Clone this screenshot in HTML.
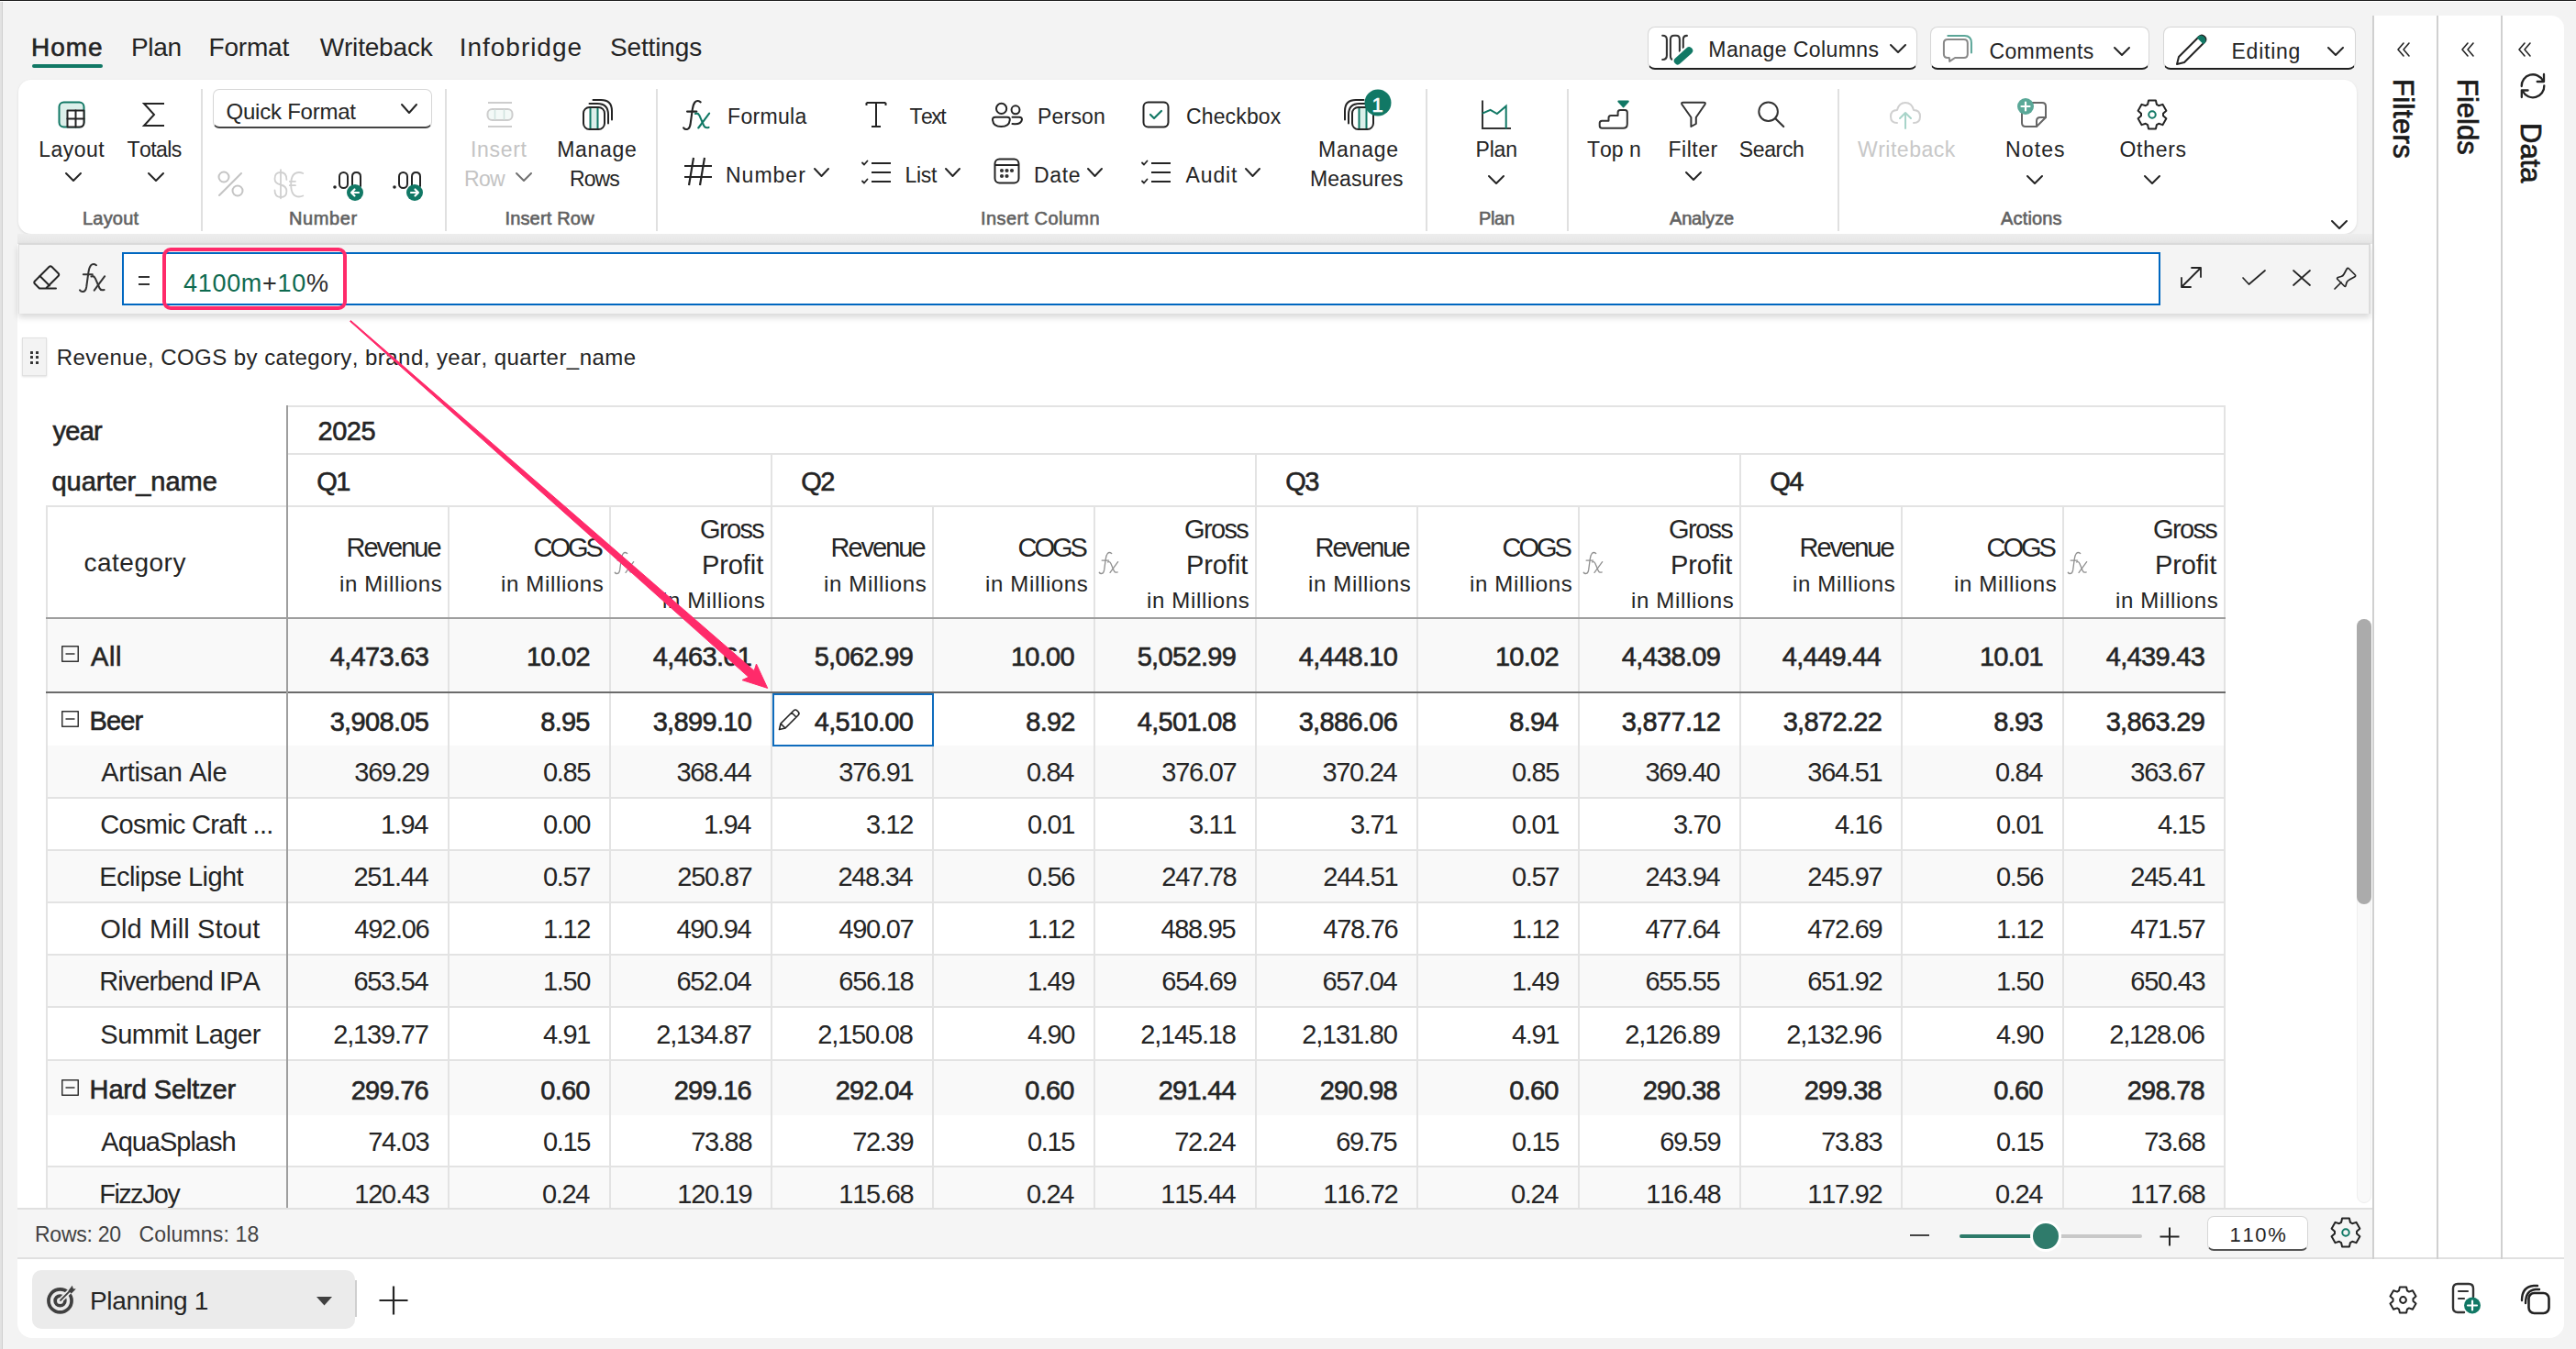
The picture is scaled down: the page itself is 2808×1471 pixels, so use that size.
<!DOCTYPE html>
<html><head><meta charset="utf-8"><title>Planning</title>
<style>
html,body{margin:0;padding:0;width:2808px;height:1471px;overflow:hidden;background:#f3f3f3;}
.r{position:absolute;}
.t{position:absolute;white-space:nowrap;line-height:1;font-family:"Liberation Sans",sans-serif;font-kerning:none;}
svg.r{overflow:visible;}
</style></head><body>
<div class="r" style="left:0px;top:0px;width:2808px;height:1px;background:#1c1c1c;"></div>
<div class="r" style="left:0px;top:1px;width:2808px;height:1px;background:#ffffff;"></div>
<div class="r" style="left:0px;top:2px;width:2px;height:1469px;background:#e2e2e2;"></div>
<div class="r" style="left:2px;top:2px;width:1px;height:1469px;background:#cfcfcf;"></div>
<div class="t" style="left:34.00px;top:38px;font-size:28px;font-weight:normal;color:#242424;letter-spacing:1.00px;-webkit-text-stroke:0.6px #242424;">Home</div>
<div class="r" style="left:35px;top:70px;width:77px;height:4px;background:#117865;border-radius:2px"></div>
<div class="t" style="left:143.00px;top:38px;font-size:28px;font-weight:normal;color:#242424;letter-spacing:-0.33px;">Plan</div>
<div class="t" style="left:227.50px;top:38px;font-size:28px;font-weight:normal;color:#242424;letter-spacing:-0.20px;">Format</div>
<div class="t" style="left:348.75px;top:38px;font-size:28px;font-weight:normal;color:#242424;letter-spacing:-0.19px;">Writeback</div>
<div class="t" style="left:500.75px;top:38px;font-size:28px;font-weight:normal;color:#242424;letter-spacing:0.97px;">Infobridge</div>
<div class="t" style="left:665.00px;top:38px;font-size:28px;font-weight:normal;color:#242424;letter-spacing:-0.14px;">Settings</div>
<div class="r" style="left:1795.5px;top:28.5px;width:294.0px;height:47.5px;box-sizing:border-box;background:#fff;border:1px solid #d6d6d6;border-bottom:2px solid #1f1f1f;border-radius:8px"></div>
<div class="r" style="left:2104px;top:28.5px;width:239px;height:47.5px;box-sizing:border-box;background:#fff;border:1px solid #d6d6d6;border-bottom:2px solid #1f1f1f;border-radius:8px"></div>
<div class="r" style="left:2358px;top:28.5px;width:209.5px;height:47.5px;box-sizing:border-box;background:#fff;border:1px solid #d6d6d6;border-bottom:2px solid #1f1f1f;border-radius:8px"></div>
<div class="t" style="left:1862.30px;top:43px;font-size:23px;font-weight:normal;color:#242424;letter-spacing:0.42px;">Manage Columns</div>
<div class="t" style="left:2168.50px;top:45px;font-size:23px;font-weight:normal;color:#242424;letter-spacing:0.36px;">Comments</div>
<div class="t" style="left:2432.50px;top:45px;font-size:23px;font-weight:normal;color:#242424;letter-spacing:0.75px;">Editing</div>
<svg class="r" style="left:2059.2px;top:47.2px;" width="20" height="12" viewBox="0 0 20 12" fill="none" stroke-linecap="round" stroke-linejoin="round"><path d="M2 2 L10.0 10 L18 2" stroke="#242424" stroke-width="2"/></svg>
<svg class="r" style="left:2302.7px;top:49.5px;" width="20" height="12" viewBox="0 0 20 12" fill="none" stroke-linecap="round" stroke-linejoin="round"><path d="M2 2 L10.0 10 L18 2" stroke="#242424" stroke-width="2"/></svg>
<svg class="r" style="left:2536.2px;top:49.5px;" width="20" height="12" viewBox="0 0 20 12" fill="none" stroke-linecap="round" stroke-linejoin="round"><path d="M2 2 L10.0 10 L18 2" stroke="#242424" stroke-width="2"/></svg>
<svg class="r" style="left:1810px;top:36px;" width="38" height="36" viewBox="0 0 38 36" fill="none" stroke-linecap="round" stroke-linejoin="round"><path d="M2.2 2.7 Q6.9 2.7 6.9 7 L6.9 24.5 Q6.9 29 2.2 29" stroke="#333" stroke-width="2.1"/><path d="M13.7 29 Q10.9 29 10.9 25 L10.9 7 Q10.9 2.7 15 2.7 L17 2.7 Q20.9 2.7 20.9 7 L20.9 20" stroke="#333" stroke-width="2.1"/><path d="M28.9 2.9 Q24.8 2.9 24.8 7 L24.8 16" stroke="#333" stroke-width="2.1"/><path d="M18.8 30.4 L31.2 19.2" stroke="#fff" stroke-width="12"/><path d="M18.8 30.4 L31.2 19.2" stroke="#117865" stroke-width="8"/></svg>
<svg class="r" style="left:2116px;top:36px;" width="36" height="34" viewBox="0 0 36 34" fill="none" stroke-linecap="round" stroke-linejoin="round"><path d="M7.3 2.9 L25.5 2.9 Q32.9 2.9 32.9 10.5 L32.9 21.6" stroke="#5aa597" stroke-width="2"/><path d="M2.9 11 Q2.9 7 7 7 L24.8 7 Q28.8 7 28.8 11 L28.8 23 Q28.8 27 24.8 27 L15.1 27 L9.2 30.9 L8.8 27 L7 27 Q2.9 27 2.9 23 Z" stroke="#888" stroke-width="2"/></svg>
<svg class="r" style="left:2370px;top:35px;" width="36" height="38" viewBox="0 0 36 38" fill="none" stroke-linecap="round" stroke-linejoin="round"><path d="M3 35 L5 27 L27 5 Q30 2 33 5 Q36 8 33 11 L11 33 Z" stroke="#242424" stroke-width="2"/><path d="M26 6 Q29 3 32 6 Q35 9 32 12 L29 9 Z" fill="#117865" stroke="#117865" stroke-width="2"/></svg>
<div class="r" style="left:2586px;top:17px;width:209px;height:1356px;background:#fff;border-top-right-radius:14px"></div>
<div class="r" style="left:19.5px;top:87px;width:2549.5px;height:168px;background:#fff;border-radius:14px;box-shadow:0 1px 3px rgba(0,0,0,0.10)"></div>
<div class="r" style="left:219px;top:97px;width:2px;height:155px;background:#e0e0e0;"></div>
<div class="r" style="left:484.5px;top:97px;width:2px;height:155px;background:#e0e0e0;"></div>
<div class="r" style="left:714.5px;top:97px;width:2px;height:155px;background:#e0e0e0;"></div>
<div class="r" style="left:1553.5px;top:97px;width:2px;height:155px;background:#e0e0e0;"></div>
<div class="r" style="left:1707.5px;top:97px;width:2px;height:155px;background:#e0e0e0;"></div>
<div class="r" style="left:2002.5px;top:97px;width:2px;height:155px;background:#e0e0e0;"></div>
<div class="t" style="left:90.00px;top:228px;font-size:20px;font-weight:normal;color:#616161;letter-spacing:0.20px;-webkit-text-stroke:0.6px #616161;">Layout</div>
<div class="t" style="left:315.00px;top:228px;font-size:20px;font-weight:normal;color:#616161;letter-spacing:0.60px;-webkit-text-stroke:0.6px #616161;">Number</div>
<div class="t" style="left:550.40px;top:228px;font-size:20px;font-weight:normal;color:#616161;letter-spacing:0.18px;-webkit-text-stroke:0.6px #616161;">Insert Row</div>
<div class="t" style="left:1069.00px;top:228px;font-size:20px;font-weight:normal;color:#616161;letter-spacing:0.42px;-webkit-text-stroke:0.6px #616161;">Insert Column</div>
<div class="t" style="left:1612.00px;top:228px;font-size:20px;font-weight:normal;color:#616161;letter-spacing:-0.33px;-webkit-text-stroke:0.6px #616161;">Plan</div>
<div class="t" style="left:1820.00px;top:228px;font-size:20px;font-weight:normal;color:#616161;letter-spacing:-0.17px;-webkit-text-stroke:0.6px #616161;">Analyze</div>
<div class="t" style="left:2181.00px;top:228px;font-size:20px;font-weight:normal;color:#616161;letter-spacing:0.17px;-webkit-text-stroke:0.6px #616161;">Actions</div>
<svg class="r" style="left:2539.5px;top:238.5px;" width="20" height="12" viewBox="0 0 20 12" fill="none" stroke-linecap="round" stroke-linejoin="round"><path d="M2 2 L10.0 10 L18 2" stroke="#242424" stroke-width="2"/></svg>
<svg class="r" style="left:63px;top:110px;" width="30" height="30" viewBox="0 0 30 30" fill="none" stroke-linecap="round" stroke-linejoin="round"><rect x="1.5" y="1.5" width="27" height="27" rx="5" fill="#dcefea" stroke="#117865" stroke-width="2"/><path d="M10.5 28.5 L10.5 10.5 L28.5 10.5 L28.5 23.5 Q28.5 28.5 23.5 28.5 Z" fill="#fff" stroke="#242424" stroke-width="2"/><path d="M19.5 10.5 L19.5 28.5 M10.5 19.5 L28.5 19.5" stroke="#242424" stroke-width="2"/></svg>
<svg class="r" style="left:155px;top:111px;" width="27" height="28" viewBox="0 0 27 28" fill="none" stroke-linecap="round" stroke-linejoin="round"><path d="M24 2 L2 2 L13 14 L2 26 L24 26" stroke="#242424" stroke-width="2" stroke-linecap="butt" stroke-linejoin="miter"/></svg>
<div class="t" style="left:42.30px;top:152px;font-size:23px;font-weight:normal;color:#242424;letter-spacing:0.48px;">Layout</div>
<div class="t" style="left:138.60px;top:152px;font-size:23px;font-weight:normal;color:#242424;letter-spacing:-0.60px;">Totals</div>
<svg class="r" style="left:70.0px;top:186.5px;" width="20" height="12" viewBox="0 0 20 12" fill="none" stroke-linecap="round" stroke-linejoin="round"><path d="M2 2 L10.0 10 L18 2" stroke="#242424" stroke-width="2"/></svg>
<svg class="r" style="left:160.0px;top:186.5px;" width="20" height="12" viewBox="0 0 20 12" fill="none" stroke-linecap="round" stroke-linejoin="round"><path d="M2 2 L10.0 10 L18 2" stroke="#242424" stroke-width="2"/></svg>
<div class="r" style="left:232px;top:97px;width:239px;height:43px;box-sizing:border-box;background:#fff;border:1px solid #d6d6d6;border-bottom:2px solid #444;border-radius:7px"></div>
<div class="t" style="left:246.50px;top:109.5px;font-size:24px;font-weight:normal;color:#242424;letter-spacing:-0.23px;">Quick Format</div>
<svg class="r" style="left:435.6px;top:112.2px;" width="20" height="13" viewBox="0 0 20 13" fill="none" stroke-linecap="round" stroke-linejoin="round"><path d="M2 2 L10.0 11 L18 2" stroke="#242424" stroke-width="2"/></svg>
<svg class="r" style="left:236px;top:185px;" width="32" height="32" viewBox="0 0 32 32" fill="none" stroke-linecap="round" stroke-linejoin="round"><circle cx="8" cy="8" r="5.5" stroke="#c4c4c4" stroke-width="2"/><circle cx="23" cy="23" r="5.5" stroke="#c4c4c4" stroke-width="2"/><path d="M3 28 L27 4" stroke="#c4c4c4" stroke-width="2"/></svg>
<svg class="r" style="left:296px;top:183px;" width="40" height="36" viewBox="0 0 40 36" fill="none" stroke-linecap="round" stroke-linejoin="round"><path d="M10 2.2 L10 33.3" stroke="#d0d0d0" stroke-width="1.8"/><path d="M16.4 12.9 Q16.4 5 10 5 Q3.5 5 3.5 12 Q3.5 17 10 18.5 Q16.4 20 16.4 25.5 Q16.4 32 10 32 Q3.5 32 3.5 24.5" stroke="#d0d0d0" stroke-width="1.8"/><path d="M34.3 6 Q32 5 30 5 Q21.2 5 21.2 18.2 Q21.2 31.5 30 31.5 Q32 31.5 34.3 30.5 M19.8 14.8 L26 14.8 M19.8 19.2 L26 19.2" stroke="#d0d0d0" stroke-width="1.8"/></svg>
<svg class="r" style="left:362px;top:186px;" width="36" height="34" viewBox="0 0 36 34" fill="none" stroke-linecap="round" stroke-linejoin="round"><circle cx="3" cy="18" r="1.8" fill="#242424"/><rect x="8" y="2" width="9" height="17" rx="4.5" stroke="#242424" stroke-width="2"/><path d="M22 17 L22 6.5 Q22 2 26.5 2 Q31 2 31 6.5 L31 17" stroke="#242424" stroke-width="2"/><circle cx="25" cy="24" r="9" fill="#117865"/><path d="M29 24 L21 24 M24.5 20.5 L21 24 L24.5 27.5" stroke="#fff" stroke-width="2.2"/></svg>
<svg class="r" style="left:426.5px;top:186px;" width="36" height="34" viewBox="0 0 36 34" fill="none" stroke-linecap="round" stroke-linejoin="round"><circle cx="3" cy="18" r="1.8" fill="#242424"/><rect x="8" y="2" width="9" height="17" rx="4.5" stroke="#242424" stroke-width="2"/><path d="M22 17 L22 6.5 Q22 2 26.5 2 Q31 2 31 6.5 L31 17" stroke="#242424" stroke-width="2"/><circle cx="25" cy="24" r="9" fill="#117865"/><path d="M21 24 L29 24 M25.5 20.5 L29 24 L25.5 27.5" stroke="#fff" stroke-width="2.2"/></svg>
<svg class="r" style="left:530px;top:110px;" width="30" height="30" viewBox="0 0 30 30" fill="none" stroke-linecap="round" stroke-linejoin="round"><path d="M2 2 L28 2 M2 28 L28 28" stroke="#cdcdcd" stroke-width="2" stroke-linecap="butt"/><rect x="1.5" y="9" width="27" height="12" rx="5" fill="#f3f9f7" stroke="#cdcdcd" stroke-width="2"/><path d="M9.5 10 L9.5 20 M19.5 10 L19.5 20" stroke="#cfe3de" stroke-width="1.5"/></svg>
<div class="t" style="left:513.00px;top:152px;font-size:23px;font-weight:normal;color:#c4c4c4;letter-spacing:0.68px;">Insert</div>
<div class="t" style="left:505.90px;top:183.6px;font-size:23px;font-weight:normal;color:#c4c4c4;letter-spacing:-0.60px;">Row</div>
<svg class="r" style="left:561.0px;top:186.5px;" width="20" height="12" viewBox="0 0 20 12" fill="none" stroke-linecap="round" stroke-linejoin="round"><path d="M2 2 L10.0 10 L18 2" stroke="#707070" stroke-width="2"/></svg>
<svg class="r" style="left:625.5px;top:106px;" width="45" height="38" viewBox="0 0 45 38" fill="none" stroke-linecap="round" stroke-linejoin="round"><path d="M20.50 3.00 L29.00 3.00 Q41.00 3.00 41.00 15.00 L41.00 24.50" stroke="#fff" stroke-width="5"/><path d="M20.50 3.00 L29.00 3.00 Q41.00 3.00 41.00 15.00 L41.00 24.50" stroke="#242424" stroke-width="2"/><path d="M16.50 7.00 L25.00 7.00 Q37.00 7.00 37.00 19.00 L37.00 28.50" stroke="#fff" stroke-width="5"/><path d="M16.50 7.00 L25.00 7.00 Q37.00 7.00 37.00 19.00 L37.00 28.50" stroke="#242424" stroke-width="2"/><rect x="10.00" y="11" width="23" height="24" rx="6.5" fill="#fff" stroke="#fff" stroke-width="5"/><rect x="17.00" y="12" width="9" height="22" fill="#dcefea"/><path d="M17.50 12 L17.50 34 M25.50 12 L25.50 34" stroke="#117865" stroke-width="2" stroke-linecap="butt"/><rect x="10.00" y="11" width="23" height="24" rx="6.5" stroke="#242424" stroke-width="2"/></svg>
<div class="t" style="left:607.20px;top:152px;font-size:23px;font-weight:normal;color:#242424;letter-spacing:0.70px;">Manage</div>
<div class="t" style="left:621.00px;top:183.6px;font-size:23px;font-weight:normal;color:#242424;letter-spacing:-0.90px;">Rows</div>
<svg class="r" style="left:742px;top:108px;" width="33" height="35" viewBox="0 0 33 35" fill="none" stroke-linecap="round" stroke-linejoin="round"><g transform="scale(1.0312,1.0294)"><path d="M21 3.2 Q17.5 0.6 15 3.4 Q13.2 5.6 12.4 11 L10.2 27 Q9.4 31.5 6.8 32 Q4.4 32.4 3 30.4" stroke="#242424" stroke-width="2.04" fill="none"/><path d="M6.8 13.2 L16.8 13.2" stroke="#242424" stroke-width="2.04" fill="none"/><path d="M15.5 15.5 Q18.3 14.2 19.9 17.6 L24.4 28 Q25.8 31.2 29.6 30" stroke="#117865" stroke-width="2.04" fill="none"/><path d="M30.2 15.2 L18.7 30.6" stroke="#117865" stroke-width="2.04" fill="none"/></g></svg>
<div class="t" style="left:793.00px;top:116px;font-size:23px;font-weight:normal;color:#242424;letter-spacing:0.33px;">Formula</div>
<svg class="r" style="left:943px;top:110px;" width="24" height="30" viewBox="0 0 24 30" fill="none" stroke-linecap="round" stroke-linejoin="round"><path d="M1.5 2 L22.5 2 M1.5 2 L1.5 5 M22.5 2 L22.5 5 M12 2 L12 28 M7 28 L17 28" stroke="#242424" stroke-width="2" stroke-linecap="butt"/></svg>
<div class="t" style="left:991.50px;top:116px;font-size:23px;font-weight:normal;color:#242424;letter-spacing:-1.50px;">Text</div>
<svg class="r" style="left:1080px;top:111px;" width="36" height="28" viewBox="0 0 36 28" fill="none" stroke-linecap="round" stroke-linejoin="round"><circle cx="11.6" cy="7.4" r="5.6" stroke="#242424" stroke-width="2"/><path d="M5 16.8 L18 16.8 Q21 16.8 20.8 19.8 Q20 27 11.4 27 Q2.8 27 2 19.8 Q1.8 16.8 5 16.8 Z" stroke="#242424" stroke-width="2"/><circle cx="27" cy="8.8" r="4.45" stroke="#242424" stroke-width="2"/><path d="M23.5 16.8 L31 16.8 Q34.2 16.8 34 19.5 Q33 24.5 26 24.3 L23.5 24" stroke="#242424" stroke-width="2"/></svg>
<div class="t" style="left:1131.00px;top:116px;font-size:23px;font-weight:normal;color:#242424;letter-spacing:0.20px;">Person</div>
<svg class="r" style="left:1245px;top:110px;" width="30" height="30" viewBox="0 0 30 30" fill="none" stroke-linecap="round" stroke-linejoin="round"><rect x="1.5" y="1.5" width="27" height="27" rx="5" stroke="#242424" stroke-width="2"/><path d="M9 15 L13 19 L21 11" stroke="#117865" stroke-width="2.2"/></svg>
<div class="t" style="left:1293.00px;top:116px;font-size:23px;font-weight:normal;color:#242424;letter-spacing:0.14px;">Checkbox</div>
<svg class="r" style="left:744px;top:170px;" width="34" height="34" viewBox="0 0 34 34" fill="none" stroke-linecap="round" stroke-linejoin="round"><path d="M12 2 L7 32 M24 2 L19 32 M2 11 L32 11 M2 23 L32 23" stroke="#242424" stroke-width="2.2" stroke-linecap="butt"/></svg>
<div class="t" style="left:791.00px;top:180px;font-size:23px;font-weight:normal;color:#242424;letter-spacing:1.00px;">Number</div>
<svg class="r" style="left:886.0px;top:182.0px;" width="19" height="12" viewBox="0 0 19 12" fill="none" stroke-linecap="round" stroke-linejoin="round"><path d="M2 2 L9.5 10 L17 2" stroke="#242424" stroke-width="2"/></svg>
<svg class="r" style="left:938px;top:175px;" width="35" height="27" viewBox="0 0 35 27" fill="none" stroke-linecap="round" stroke-linejoin="round"><path d="M12 3 L33 3 M12 13 L33 13 M12 23 L33 23" stroke="#242424" stroke-width="2" stroke-linecap="butt"/><path d="M2 2.5 L4 4.5 L7.5 0.5 M2 22.5 L4 24.5 L7.5 20.5" stroke="#242424" stroke-width="1.8"/></svg>
<div class="t" style="left:986.50px;top:180px;font-size:23px;font-weight:normal;color:#242424;letter-spacing:-0.33px;">List</div>
<svg class="r" style="left:1028.5px;top:182.0px;" width="19" height="12" viewBox="0 0 19 12" fill="none" stroke-linecap="round" stroke-linejoin="round"><path d="M2 2 L9.5 10 L17 2" stroke="#242424" stroke-width="2"/></svg>
<svg class="r" style="left:1083px;top:172px;" width="30" height="30" viewBox="0 0 30 30" fill="none" stroke-linecap="round" stroke-linejoin="round"><rect x="1.5" y="1.5" width="26" height="26" rx="5" stroke="#242424" stroke-width="2"/><path d="M2 8 L27 8" stroke="#242424" stroke-width="2"/><circle cx="9" cy="14" r="2.1" fill="#333"/><circle cx="14.5" cy="14" r="2.1" fill="#333"/><circle cx="20" cy="14" r="2.1" fill="#333"/><circle cx="9" cy="20" r="2.1" fill="#333"/><circle cx="14.5" cy="20" r="2.1" fill="#333"/></svg>
<div class="t" style="left:1127.00px;top:180px;font-size:23px;font-weight:normal;color:#242424;letter-spacing:0.67px;">Date</div>
<svg class="r" style="left:1183.5px;top:182.0px;" width="19" height="12" viewBox="0 0 19 12" fill="none" stroke-linecap="round" stroke-linejoin="round"><path d="M2 2 L9.5 10 L17 2" stroke="#242424" stroke-width="2"/></svg>
<svg class="r" style="left:1243px;top:175px;" width="35" height="27" viewBox="0 0 35 27" fill="none" stroke-linecap="round" stroke-linejoin="round"><path d="M12 3 L33 3 M12 13 L33 13 M12 23 L33 23" stroke="#242424" stroke-width="2" stroke-linecap="butt"/><path d="M2 2.5 L4 4.5 L7.5 0.5 M2 22.5 L4 24.5 L7.5 20.5" stroke="#242424" stroke-width="1.8"/></svg>
<div class="t" style="left:1292.50px;top:180px;font-size:23px;font-weight:normal;color:#242424;letter-spacing:0.88px;">Audit</div>
<svg class="r" style="left:1355.5px;top:182.0px;" width="19" height="12" viewBox="0 0 19 12" fill="none" stroke-linecap="round" stroke-linejoin="round"><path d="M2 2 L9.5 10 L17 2" stroke="#242424" stroke-width="2"/></svg>
<svg class="r" style="left:1463.5px;top:105.5px;" width="45" height="38" viewBox="0 0 45 38" fill="none" stroke-linecap="round" stroke-linejoin="round"><path d="M22.50 3.00 L14.00 3.00 Q2.00 3.00 2.00 15.00 L2.00 24.50" stroke="#fff" stroke-width="5"/><path d="M22.50 3.00 L14.00 3.00 Q2.00 3.00 2.00 15.00 L2.00 24.50" stroke="#242424" stroke-width="2"/><path d="M26.50 7.00 L18.00 7.00 Q6.00 7.00 6.00 19.00 L6.00 28.50" stroke="#fff" stroke-width="5"/><path d="M26.50 7.00 L18.00 7.00 Q6.00 7.00 6.00 19.00 L6.00 28.50" stroke="#242424" stroke-width="2"/><rect x="10.00" y="11.0" width="23" height="24" rx="6.5" fill="#fff" stroke="#fff" stroke-width="5"/><rect x="17.00" y="12.0" width="9" height="22" fill="#dcefea"/><path d="M17.50 12.0 L17.50 34.0 M25.50 12.0 L25.50 34.0" stroke="#117865" stroke-width="2" stroke-linecap="butt"/><rect x="10.00" y="11.0" width="23" height="24" rx="6.5" stroke="#242424" stroke-width="2"/></svg>
<svg class="r" style="left:1487px;top:97px;" width="30" height="30" viewBox="0 0 30 30" fill="none" stroke-linecap="round" stroke-linejoin="round"><circle cx="15" cy="15" r="14.5" fill="#117865"/></svg>
<div class="t" style="left:1495.50px;top:104px;font-size:22px;font-weight:normal;color:#fff;-webkit-text-stroke:0.6px #fff;">1</div>
<div class="t" style="left:1437.00px;top:152px;font-size:23px;font-weight:normal;color:#242424;letter-spacing:0.80px;">Manage</div>
<div class="t" style="left:1428.00px;top:184px;font-size:23px;font-weight:normal;color:#242424;letter-spacing:0.07px;">Measures</div>
<svg class="r" style="left:1614px;top:109px;" width="34" height="34" viewBox="0 0 34 34" fill="none" stroke-linecap="round" stroke-linejoin="round"><path d="M2 0.5 L2 31 L33 31" stroke="#333" stroke-width="2" stroke-linecap="butt" stroke-linejoin="miter"/><path d="M2.5 14.4 L10.6 10.9 L17.9 15.1 L27.7 6.7 L27.7 30.6" stroke="#117865" stroke-width="2" stroke-linejoin="miter"/></svg>
<div class="t" style="left:1608.50px;top:152px;font-size:23px;font-weight:normal;color:#242424;letter-spacing:-0.17px;">Plan</div>
<svg class="r" style="left:1621.0px;top:190.2px;" width="20" height="12" viewBox="0 0 20 12" fill="none" stroke-linecap="round" stroke-linejoin="round"><path d="M2 2 L10.0 10 L18 2" stroke="#242424" stroke-width="2"/></svg>
<svg class="r" style="left:1742px;top:108px;" width="34" height="34" viewBox="0 0 34 34" fill="none" stroke-linecap="round" stroke-linejoin="round"><path d="M1.7 29 L1.7 26.3 Q1.7 23.8 4.2 23.8 L11.5 23.8 L11.5 20.4 Q11.5 17.9 14 17.9 L21.6 17.9 L21.6 14.4 Q21.6 11.9 24.1 11.9 L29.3 11.9 Q31.8 11.9 31.8 14.4 L31.8 27.3 Q31.8 31.8 27.3 31.8 L4.2 31.8 Q1.7 31.8 1.7 29 Z" stroke="#333" stroke-width="2"/><path d="M22.3 2.5 L32.8 2.5 L27.6 8.4 Z" fill="#117865" stroke="#117865" stroke-width="2"/></svg>
<div class="t" style="left:1730.00px;top:152px;font-size:23px;font-weight:normal;color:#242424;">Top n</div>
<svg class="r" style="left:1830px;top:110px;" width="32" height="30" viewBox="0 0 32 30" fill="none" stroke-linecap="round" stroke-linejoin="round"><path d="M4.8 1.7 L27.1 1.7 Q29.8 1.7 28.4 4 L18.8 18 L18.8 25 L13.4 28 L13.4 18 L3.5 4 Q2.2 1.7 4.8 1.7 Z" stroke="#333" stroke-width="2"/></svg>
<div class="t" style="left:1818.50px;top:152px;font-size:23px;font-weight:normal;color:#242424;letter-spacing:0.50px;">Filter</div>
<svg class="r" style="left:1836.0px;top:186.0px;" width="20" height="12" viewBox="0 0 20 12" fill="none" stroke-linecap="round" stroke-linejoin="round"><path d="M2 2 L10.0 10 L18 2" stroke="#242424" stroke-width="2"/></svg>
<svg class="r" style="left:1914px;top:108px;" width="34" height="34" viewBox="0 0 34 34" fill="none" stroke-linecap="round" stroke-linejoin="round"><circle cx="13.6" cy="13.7" r="10.3" stroke="#333" stroke-width="2"/><path d="M21 21 L30.2 30" stroke="#333" stroke-width="2.2"/></svg>
<div class="t" style="left:1895.70px;top:152px;font-size:23px;font-weight:normal;color:#242424;letter-spacing:-0.34px;">Search</div>
<svg class="r" style="left:2059px;top:110px;" width="36" height="32" viewBox="0 0 36 32" fill="none" stroke-linecap="round" stroke-linejoin="round"><path d="M9 24 Q2 24 2 17 Q2 10 9 10 Q11 2 18 2 Q25 2 27 10 Q34 10 34 17 Q34 24 27 24" stroke="#d0d0d0" stroke-width="2"/><path d="M18 30 L18 13 M12 19 L18 13 L24 19" stroke="#a8d4c9" stroke-width="2"/></svg>
<div class="t" style="left:2025.00px;top:152px;font-size:23px;font-weight:normal;color:#c8c8c8;letter-spacing:0.50px;">Writeback</div>
<svg class="r" style="left:2198px;top:106px;" width="36" height="36" viewBox="0 0 36 36" fill="none" stroke-linecap="round" stroke-linejoin="round"><path d="M14 6 L28 6 Q32 6 32 10 L32 22 L22 32 L10 32 Q6 32 6 28 L6 16" stroke="#666" stroke-width="2"/><path d="M32 22 L26 22 Q22 22 22 26 L22 32" stroke="#666" stroke-width="2"/><circle cx="10" cy="10" r="9" fill="#5aa898"/><path d="M10 5.5 L10 14.5 M5.5 10 L14.5 10" stroke="#fff" stroke-width="2.2"/></svg>
<div class="t" style="left:2186.00px;top:152px;font-size:23px;font-weight:normal;color:#242424;letter-spacing:1.12px;">Notes</div>
<svg class="r" style="left:2208.0px;top:190.0px;" width="20" height="12" viewBox="0 0 20 12" fill="none" stroke-linecap="round" stroke-linejoin="round"><path d="M2 2 L10.0 10 L18 2" stroke="#242424" stroke-width="2"/></svg>
<svg class="r" style="left:2329px;top:108px;" width="34" height="34" viewBox="0 0 34 34" fill="none" stroke-linecap="round" stroke-linejoin="round"><path d="M13.05 1.52 L20.95 1.52 L21.92 5.98 L24.08 7.23 L28.43 5.83 L32.39 12.68 L29.01 15.75 L29.01 18.25 L32.39 21.32 L28.43 28.17 L24.08 26.77 L21.92 28.02 L20.95 32.48 L13.05 32.48 L12.08 28.02 L9.92 26.77 L5.57 28.17 L1.61 21.32 L4.99 18.25 L4.99 15.75 L1.61 12.68 L5.57 5.83 L9.92 7.23 L12.08 5.98 Z" stroke="#242424" stroke-width="2" stroke-linejoin="round"/><circle cx="17.0" cy="17.0" r="3.74" stroke="#117865" stroke-width="2"/></svg>
<div class="t" style="left:2310.50px;top:152px;font-size:23px;font-weight:normal;color:#242424;letter-spacing:0.70px;">Others</div>
<svg class="r" style="left:2336.0px;top:190.0px;" width="20" height="12" viewBox="0 0 20 12" fill="none" stroke-linecap="round" stroke-linejoin="round"><path d="M2 2 L10.0 10 L18 2" stroke="#242424" stroke-width="2"/></svg>
<div class="r" style="left:19px;top:265px;width:2776px;height:1193.5px;background:#fff;border-radius:0 0 16px 16px"></div>
<div class="r" style="left:19px;top:255px;width:2567px;height:11px;background:linear-gradient(#ededed,#e6e6e6)"></div>
<div class="r" style="left:19.5px;top:265px;width:2564px;height:77px;box-sizing:border-box;background:#f4f4f4;border-top:2px solid #d9d9d9;border-left:1px solid #e0e0e0;border-right:2px solid #dcdcdc;box-shadow:0 4px 7px rgba(0,0,0,0.16)"></div>
<svg class="r" style="left:35px;top:288px;" width="32" height="30" viewBox="0 0 32 30" fill="none" stroke-linecap="round" stroke-linejoin="round"><path d="M14 26.5 L8 26.5 L3 21.5 Q1.5 20 3 18.5 L18.5 3 Q20 1.5 21.5 3 L28.5 10 Q30 11.5 28.5 13 L15 26.5 L26 26.5" stroke="#242424" stroke-width="2"/><path d="M8.5 13 L19 23.5" stroke="#242424" stroke-width="2"/></svg>
<svg class="r" style="left:84px;top:286px;" width="32" height="34" viewBox="0 0 32 34" fill="none" stroke-linecap="round" stroke-linejoin="round"><g transform="scale(1.0000,1.0000)"><path d="M21 3.2 Q17.5 0.6 15 3.4 Q13.2 5.6 12.4 11 L10.2 27 Q9.4 31.5 6.8 32 Q4.4 32.4 3 30.4" stroke="#333" stroke-width="2.00" fill="none"/><path d="M6.8 13.2 L16.8 13.2" stroke="#333" stroke-width="2.00" fill="none"/><path d="M15.5 15.5 Q18.3 14.2 19.9 17.6 L24.4 28 Q25.8 31.2 29.6 30" stroke="#333" stroke-width="2.00" fill="none"/><path d="M30.2 15.2 L18.7 30.6" stroke="#333" stroke-width="2.00" fill="none"/></g></svg>
<div class="r" style="left:132.5px;top:275px;width:2222px;height:58px;box-sizing:border-box;background:#fff;border:2px solid #0067c0"></div>
<div class="r" style="left:150.75px;top:301px;width:12.5px;height:2.2px;background:#333;"></div>
<div class="r" style="left:150.75px;top:309px;width:12.5px;height:2.2px;background:#333;"></div>
<div class="r" style="left:177px;top:270px;width:201px;height:67.5px;box-sizing:border-box;border:4px solid #ff2a6a;border-radius:9px"></div>
<div class="t" style="left:200.00px;top:296px;font-size:27px;font-weight:normal;color:#0e6a4f;letter-spacing:0.70px;"><span style="color:#0e6a4f">4100m</span><span style="color:#2b2b2b">+</span><span style="color:#0e6a4f">10</span><span style="color:#2b2b2b">%</span></div>
<svg class="r" style="left:2375px;top:289px;" width="27" height="27" viewBox="0 0 27 27" fill="none" stroke-linecap="round" stroke-linejoin="round"><path d="M3 24 L24 3 M14 3 L24 3 L24 13 M3 14 L3 24 L13 24" stroke="#242424" stroke-width="1.8"/></svg>
<svg class="r" style="left:2442.5px;top:293px;" width="28" height="20" viewBox="0 0 28 20" fill="none" stroke-linecap="round" stroke-linejoin="round"><path d="M2 10 L8.5 17 L26 2" stroke="#242424" stroke-width="1.7"/></svg>
<svg class="r" style="left:2497.5px;top:293px;" width="23" height="20" viewBox="0 0 23 20" fill="none" stroke-linecap="round" stroke-linejoin="round"><path d="M2 2 L20 18 M20 2 L2 18" stroke="#242424" stroke-width="1.7"/></svg>
<svg class="r" style="left:2542.5px;top:289px;" width="28" height="28" viewBox="0 0 28 28" fill="none" stroke-linecap="round" stroke-linejoin="round"><path d="M2 26 L9 19" stroke="#242424" stroke-width="1.7"/><path d="M5 15.5 L12.5 23 Q13.5 24 14 22.5 L15 19 Q16 17 18 16 L23.5 13 Q25.5 12 24 10.5 L17.5 4 Q16 2.5 15 4.5 L12 10 Q11 12 9 12.5 L5.5 13.5 Q4 14.5 5 15.5 Z" stroke="#242424" stroke-width="1.7"/></svg>
<div class="r" style="left:23.5px;top:367.5px;width:27px;height:42px;box-sizing:border-box;background:#f3f3f3;border:1px solid #e0e0e0;box-shadow:0 1px 2px rgba(0,0,0,0.12)"></div>
<div class="r" style="left:32.5px;top:382.5px;width:3px;height:3px;background:#333;border-radius:0.5px"></div>
<div class="r" style="left:32.5px;top:388px;width:3px;height:3px;background:#333;border-radius:0.5px"></div>
<div class="r" style="left:32.5px;top:393.5px;width:3px;height:3px;background:#333;border-radius:0.5px"></div>
<div class="r" style="left:38.5px;top:382.5px;width:3px;height:3px;background:#333;border-radius:0.5px"></div>
<div class="r" style="left:38.5px;top:388px;width:3px;height:3px;background:#333;border-radius:0.5px"></div>
<div class="r" style="left:38.5px;top:393.5px;width:3px;height:3px;background:#333;border-radius:0.5px"></div>
<div class="t" style="left:61.75px;top:378px;font-size:24px;font-weight:normal;color:#242424;letter-spacing:0.45px;">Revenue, COGS by category, brand, year, quarter_name</div>
<div class="r" style="left:19px;top:341px;width:2567px;height:977px;overflow:hidden"><div class="r" style="left:-19px;top:-341px;width:2808px;height:1471px"><div class="r" style="left:50px;top:675px;width:2376px;height:79px;background:#f9f9f9;"></div>
<div class="r" style="left:50px;top:813px;width:2376px;height:57px;background:#f9f9f9;"></div>
<div class="r" style="left:50px;top:927px;width:2376px;height:57px;background:#f9f9f9;"></div>
<div class="r" style="left:50px;top:1041px;width:2376px;height:57px;background:#f9f9f9;"></div>
<div class="r" style="left:50px;top:1155.5px;width:2376px;height:60.0px;background:#f9f9f9;"></div>
<div class="r" style="left:50px;top:1272px;width:2376px;height:58px;background:#f9f9f9;"></div>
<div class="r" style="left:312px;top:442px;width:2114px;height:2px;background:#e3e3e3;"></div>
<div class="r" style="left:312px;top:494px;width:2114px;height:2px;background:#e3e3e3;"></div>
<div class="r" style="left:50px;top:551px;width:2376px;height:2px;background:#e3e3e3;"></div>
<div class="r" style="left:50px;top:673px;width:2376px;height:2px;background:#9e9e9e;"></div>
<div class="r" style="left:50px;top:754px;width:2376px;height:2px;background:#6b6b6b;"></div>
<div class="r" style="left:50px;top:869px;width:2376px;height:2px;background:#e3e3e3;"></div>
<div class="r" style="left:50px;top:926px;width:2376px;height:2px;background:#e3e3e3;"></div>
<div class="r" style="left:50px;top:983px;width:2376px;height:2px;background:#e3e3e3;"></div>
<div class="r" style="left:50px;top:1040px;width:2376px;height:2px;background:#e3e3e3;"></div>
<div class="r" style="left:50px;top:1097px;width:2376px;height:2px;background:#e3e3e3;"></div>
<div class="r" style="left:50px;top:1154.5px;width:2376px;height:2px;background:#e3e3e3;"></div>
<div class="r" style="left:50px;top:1271px;width:2376px;height:2px;background:#e3e3e3;"></div>
<div class="r" style="left:50px;top:551px;width:2px;height:767px;background:#e3e3e3;"></div>
<div class="r" style="left:312px;top:442px;width:2px;height:876px;background:#9e9e9e;"></div>
<div class="r" style="left:488px;top:551px;width:2px;height:767px;background:#e3e3e3;"></div>
<div class="r" style="left:664px;top:551px;width:2px;height:767px;background:#e3e3e3;"></div>
<div class="r" style="left:840px;top:494px;width:2px;height:824px;background:#e3e3e3;"></div>
<div class="r" style="left:1016px;top:551px;width:2px;height:767px;background:#e3e3e3;"></div>
<div class="r" style="left:1192px;top:551px;width:2px;height:767px;background:#e3e3e3;"></div>
<div class="r" style="left:1368px;top:494px;width:2px;height:824px;background:#e3e3e3;"></div>
<div class="r" style="left:1544px;top:551px;width:2px;height:767px;background:#e3e3e3;"></div>
<div class="r" style="left:1720px;top:551px;width:2px;height:767px;background:#e3e3e3;"></div>
<div class="r" style="left:1896px;top:494px;width:2px;height:824px;background:#e3e3e3;"></div>
<div class="r" style="left:2072px;top:551px;width:2px;height:767px;background:#e3e3e3;"></div>
<div class="r" style="left:2248px;top:551px;width:2px;height:767px;background:#e3e3e3;"></div>
<div class="r" style="left:2424px;top:442px;width:2px;height:876px;background:#e3e3e3;"></div>
<div class="r" style="left:50px;top:673px;width:2376px;height:2px;background:#9e9e9e;"></div>
<div class="r" style="left:50px;top:754px;width:2376px;height:2px;background:#6b6b6b;"></div>
<div class="r" style="left:312px;top:442px;width:2px;height:876px;background:#9e9e9e;"></div>
<div class="t" style="left:57.50px;top:455.5px;font-size:29px;font-weight:normal;color:#242424;letter-spacing:-0.75px;-webkit-text-stroke:0.6px #242424;">year</div>
<div class="t" style="left:346.50px;top:455.5px;font-size:29px;font-weight:normal;color:#242424;letter-spacing:-0.50px;-webkit-text-stroke:0.6px #242424;">2025</div>
<div class="t" style="left:56.50px;top:510.5px;font-size:29px;font-weight:normal;color:#242424;letter-spacing:-0.02px;-webkit-text-stroke:0.6px #242424;">quarter_name</div>
<div class="t" style="left:345.25px;top:510.5px;font-size:29px;font-weight:normal;color:#242424;letter-spacing:-1.50px;-webkit-text-stroke:0.6px #242424;">Q1</div>
<div class="t" style="left:873.25px;top:510.5px;font-size:29px;font-weight:normal;color:#242424;letter-spacing:-1.50px;-webkit-text-stroke:0.6px #242424;">Q2</div>
<div class="t" style="left:1401.25px;top:510.5px;font-size:29px;font-weight:normal;color:#242424;letter-spacing:-1.50px;-webkit-text-stroke:0.6px #242424;">Q3</div>
<div class="t" style="left:1929.25px;top:510.5px;font-size:29px;font-weight:normal;color:#242424;letter-spacing:-1.50px;-webkit-text-stroke:0.6px #242424;">Q4</div>
<div class="t" style="left:91.50px;top:600px;font-size:28px;font-weight:normal;color:#242424;letter-spacing:0.50px;">category</div>
<div class="t" style="left:377.50px;top:583px;font-size:29px;font-weight:normal;color:#242424;letter-spacing:-2.00px;">Revenue</div>
<div class="t" style="left:370.00px;top:625px;font-size:24px;font-weight:normal;color:#242424;letter-spacing:0.65px;">in Millions</div>
<div class="t" style="left:581.50px;top:583px;font-size:29px;font-weight:normal;color:#242424;letter-spacing:-3.00px;">COGS</div>
<div class="t" style="left:546.00px;top:625px;font-size:24px;font-weight:normal;color:#242424;letter-spacing:0.65px;">in Millions</div>
<div class="t" style="left:763.00px;top:563px;font-size:29px;font-weight:normal;color:#242424;letter-spacing:-1.62px;">Gross</div>
<div class="t" style="left:765.00px;top:602px;font-size:29px;font-weight:normal;color:#242424;letter-spacing:-0.10px;">Profit</div>
<div class="t" style="left:722.00px;top:643px;font-size:24px;font-weight:normal;color:#242424;letter-spacing:0.65px;">in Millions</div>
<svg class="r" style="left:668px;top:601px;" width="24" height="26" viewBox="0 0 24 26" fill="none" stroke-linecap="round" stroke-linejoin="round"><g transform="scale(0.7500,0.7647)"><path d="M21 3.2 Q17.5 0.6 15 3.4 Q13.2 5.6 12.4 11 L10.2 27 Q9.4 31.5 6.8 32 Q4.4 32.4 3 30.4" stroke="#8f8f8f" stroke-width="1.73" fill="none"/><path d="M6.8 13.2 L16.8 13.2" stroke="#8f8f8f" stroke-width="1.73" fill="none"/><path d="M15.5 15.5 Q18.3 14.2 19.9 17.6 L24.4 28 Q25.8 31.2 29.6 30" stroke="#8f8f8f" stroke-width="1.73" fill="none"/><path d="M30.2 15.2 L18.7 30.6" stroke="#8f8f8f" stroke-width="1.73" fill="none"/></g></svg>
<div class="t" style="left:905.50px;top:583px;font-size:29px;font-weight:normal;color:#242424;letter-spacing:-2.00px;">Revenue</div>
<div class="t" style="left:898.00px;top:625px;font-size:24px;font-weight:normal;color:#242424;letter-spacing:0.65px;">in Millions</div>
<div class="t" style="left:1109.50px;top:583px;font-size:29px;font-weight:normal;color:#242424;letter-spacing:-3.00px;">COGS</div>
<div class="t" style="left:1074.00px;top:625px;font-size:24px;font-weight:normal;color:#242424;letter-spacing:0.65px;">in Millions</div>
<div class="t" style="left:1291.00px;top:563px;font-size:29px;font-weight:normal;color:#242424;letter-spacing:-1.62px;">Gross</div>
<div class="t" style="left:1293.00px;top:602px;font-size:29px;font-weight:normal;color:#242424;letter-spacing:-0.10px;">Profit</div>
<div class="t" style="left:1250.00px;top:643px;font-size:24px;font-weight:normal;color:#242424;letter-spacing:0.65px;">in Millions</div>
<svg class="r" style="left:1196px;top:601px;" width="24" height="26" viewBox="0 0 24 26" fill="none" stroke-linecap="round" stroke-linejoin="round"><g transform="scale(0.7500,0.7647)"><path d="M21 3.2 Q17.5 0.6 15 3.4 Q13.2 5.6 12.4 11 L10.2 27 Q9.4 31.5 6.8 32 Q4.4 32.4 3 30.4" stroke="#8f8f8f" stroke-width="1.73" fill="none"/><path d="M6.8 13.2 L16.8 13.2" stroke="#8f8f8f" stroke-width="1.73" fill="none"/><path d="M15.5 15.5 Q18.3 14.2 19.9 17.6 L24.4 28 Q25.8 31.2 29.6 30" stroke="#8f8f8f" stroke-width="1.73" fill="none"/><path d="M30.2 15.2 L18.7 30.6" stroke="#8f8f8f" stroke-width="1.73" fill="none"/></g></svg>
<div class="t" style="left:1433.50px;top:583px;font-size:29px;font-weight:normal;color:#242424;letter-spacing:-2.00px;">Revenue</div>
<div class="t" style="left:1426.00px;top:625px;font-size:24px;font-weight:normal;color:#242424;letter-spacing:0.65px;">in Millions</div>
<div class="t" style="left:1637.50px;top:583px;font-size:29px;font-weight:normal;color:#242424;letter-spacing:-3.00px;">COGS</div>
<div class="t" style="left:1602.00px;top:625px;font-size:24px;font-weight:normal;color:#242424;letter-spacing:0.65px;">in Millions</div>
<div class="t" style="left:1819.00px;top:563px;font-size:29px;font-weight:normal;color:#242424;letter-spacing:-1.62px;">Gross</div>
<div class="t" style="left:1821.00px;top:602px;font-size:29px;font-weight:normal;color:#242424;letter-spacing:-0.10px;">Profit</div>
<div class="t" style="left:1778.00px;top:643px;font-size:24px;font-weight:normal;color:#242424;letter-spacing:0.65px;">in Millions</div>
<svg class="r" style="left:1724px;top:601px;" width="24" height="26" viewBox="0 0 24 26" fill="none" stroke-linecap="round" stroke-linejoin="round"><g transform="scale(0.7500,0.7647)"><path d="M21 3.2 Q17.5 0.6 15 3.4 Q13.2 5.6 12.4 11 L10.2 27 Q9.4 31.5 6.8 32 Q4.4 32.4 3 30.4" stroke="#8f8f8f" stroke-width="1.73" fill="none"/><path d="M6.8 13.2 L16.8 13.2" stroke="#8f8f8f" stroke-width="1.73" fill="none"/><path d="M15.5 15.5 Q18.3 14.2 19.9 17.6 L24.4 28 Q25.8 31.2 29.6 30" stroke="#8f8f8f" stroke-width="1.73" fill="none"/><path d="M30.2 15.2 L18.7 30.6" stroke="#8f8f8f" stroke-width="1.73" fill="none"/></g></svg>
<div class="t" style="left:1961.50px;top:583px;font-size:29px;font-weight:normal;color:#242424;letter-spacing:-2.00px;">Revenue</div>
<div class="t" style="left:1954.00px;top:625px;font-size:24px;font-weight:normal;color:#242424;letter-spacing:0.65px;">in Millions</div>
<div class="t" style="left:2165.50px;top:583px;font-size:29px;font-weight:normal;color:#242424;letter-spacing:-3.00px;">COGS</div>
<div class="t" style="left:2130.00px;top:625px;font-size:24px;font-weight:normal;color:#242424;letter-spacing:0.65px;">in Millions</div>
<div class="t" style="left:2347.00px;top:563px;font-size:29px;font-weight:normal;color:#242424;letter-spacing:-1.62px;">Gross</div>
<div class="t" style="left:2349.00px;top:602px;font-size:29px;font-weight:normal;color:#242424;letter-spacing:-0.10px;">Profit</div>
<div class="t" style="left:2306.00px;top:643px;font-size:24px;font-weight:normal;color:#242424;letter-spacing:0.65px;">in Millions</div>
<svg class="r" style="left:2252px;top:601px;" width="24" height="26" viewBox="0 0 24 26" fill="none" stroke-linecap="round" stroke-linejoin="round"><g transform="scale(0.7500,0.7647)"><path d="M21 3.2 Q17.5 0.6 15 3.4 Q13.2 5.6 12.4 11 L10.2 27 Q9.4 31.5 6.8 32 Q4.4 32.4 3 30.4" stroke="#8f8f8f" stroke-width="1.73" fill="none"/><path d="M6.8 13.2 L16.8 13.2" stroke="#8f8f8f" stroke-width="1.73" fill="none"/><path d="M15.5 15.5 Q18.3 14.2 19.9 17.6 L24.4 28 Q25.8 31.2 29.6 30" stroke="#8f8f8f" stroke-width="1.73" fill="none"/><path d="M30.2 15.2 L18.7 30.6" stroke="#8f8f8f" stroke-width="1.73" fill="none"/></g></svg>
<svg class="r" style="left:66.5px;top:704px;" width="19" height="18" viewBox="0 0 19 18" fill="none" stroke-linecap="round" stroke-linejoin="round"><rect x="0.75" y="0.75" width="17.5" height="16.5" stroke="#333" stroke-width="1.5" fill="none"/><path d="M4.5 9 L14.5 9" stroke="#333" stroke-width="1.5" stroke-linecap="butt"/></svg>
<div class="t" style="left:99.00px;top:702px;font-size:29px;font-weight:normal;color:#242424;letter-spacing:0.62px;-webkit-text-stroke:0.6px #242424;">All</div>
<div class="t" style="left:359.70px;top:702px;font-size:29px;font-weight:normal;color:#242424;letter-spacing:-0.67px;-webkit-text-stroke:0.6px #242424;">4,473.63</div>
<div class="t" style="left:573.94px;top:702px;font-size:29px;font-weight:normal;color:#242424;letter-spacing:-0.73px;-webkit-text-stroke:0.6px #242424;">10.02</div>
<div class="t" style="left:711.70px;top:702px;font-size:29px;font-weight:normal;color:#242424;letter-spacing:-0.67px;-webkit-text-stroke:0.6px #242424;">4,463.61</div>
<div class="t" style="left:887.66px;top:702px;font-size:29px;font-weight:normal;color:#242424;letter-spacing:-0.67px;-webkit-text-stroke:0.6px #242424;">5,062.99</div>
<div class="t" style="left:1101.94px;top:702px;font-size:29px;font-weight:normal;color:#242424;letter-spacing:-0.73px;-webkit-text-stroke:0.6px #242424;">10.00</div>
<div class="t" style="left:1239.66px;top:702px;font-size:29px;font-weight:normal;color:#242424;letter-spacing:-0.67px;-webkit-text-stroke:0.6px #242424;">5,052.99</div>
<div class="t" style="left:1415.70px;top:702px;font-size:29px;font-weight:normal;color:#242424;letter-spacing:-0.67px;-webkit-text-stroke:0.6px #242424;">4,448.10</div>
<div class="t" style="left:1629.94px;top:702px;font-size:29px;font-weight:normal;color:#242424;letter-spacing:-0.73px;-webkit-text-stroke:0.6px #242424;">10.02</div>
<div class="t" style="left:1767.70px;top:702px;font-size:29px;font-weight:normal;color:#242424;letter-spacing:-0.67px;-webkit-text-stroke:0.6px #242424;">4,438.09</div>
<div class="t" style="left:1942.75px;top:702px;font-size:29px;font-weight:normal;color:#242424;letter-spacing:-0.68px;-webkit-text-stroke:0.6px #242424;">4,449.44</div>
<div class="t" style="left:2157.94px;top:702px;font-size:29px;font-weight:normal;color:#242424;letter-spacing:-0.73px;-webkit-text-stroke:0.6px #242424;">10.01</div>
<div class="t" style="left:2295.70px;top:702px;font-size:29px;font-weight:normal;color:#242424;letter-spacing:-0.67px;-webkit-text-stroke:0.6px #242424;">4,439.43</div>
<svg class="r" style="left:66.5px;top:774.5px;" width="19" height="18" viewBox="0 0 19 18" fill="none" stroke-linecap="round" stroke-linejoin="round"><rect x="0.75" y="0.75" width="17.5" height="16.5" stroke="#333" stroke-width="1.5" fill="none"/><path d="M4.5 9 L14.5 9" stroke="#333" stroke-width="1.5" stroke-linecap="butt"/></svg>
<div class="t" style="left:97.60px;top:772px;font-size:29px;font-weight:normal;color:#242424;letter-spacing:-0.92px;-webkit-text-stroke:0.6px #242424;">Beer</div>
<div class="t" style="left:359.66px;top:773px;font-size:29px;font-weight:normal;color:#242424;letter-spacing:-0.67px;-webkit-text-stroke:0.6px #242424;">3,908.05</div>
<div class="t" style="left:589.31px;top:773px;font-size:29px;font-weight:normal;color:#242424;letter-spacing:-0.77px;-webkit-text-stroke:0.6px #242424;">8.95</div>
<div class="t" style="left:711.66px;top:773px;font-size:29px;font-weight:normal;color:#242424;letter-spacing:-0.67px;-webkit-text-stroke:0.6px #242424;">3,899.10</div>
<div class="t" style="left:887.70px;top:773px;font-size:29px;font-weight:normal;color:#242424;letter-spacing:-0.67px;-webkit-text-stroke:0.6px #242424;">4,510.00</div>
<div class="t" style="left:1118.27px;top:773px;font-size:29px;font-weight:normal;color:#242424;letter-spacing:-0.76px;-webkit-text-stroke:0.6px #242424;">8.92</div>
<div class="t" style="left:1239.70px;top:773px;font-size:29px;font-weight:normal;color:#242424;letter-spacing:-0.67px;-webkit-text-stroke:0.6px #242424;">4,501.08</div>
<div class="t" style="left:1415.66px;top:773px;font-size:29px;font-weight:normal;color:#242424;letter-spacing:-0.67px;-webkit-text-stroke:0.6px #242424;">3,886.06</div>
<div class="t" style="left:1645.31px;top:773px;font-size:29px;font-weight:normal;color:#242424;letter-spacing:-0.77px;-webkit-text-stroke:0.6px #242424;">8.94</div>
<div class="t" style="left:1767.66px;top:773px;font-size:29px;font-weight:normal;color:#242424;letter-spacing:-0.67px;-webkit-text-stroke:0.6px #242424;">3,877.12</div>
<div class="t" style="left:1943.66px;top:773px;font-size:29px;font-weight:normal;color:#242424;letter-spacing:-0.67px;-webkit-text-stroke:0.6px #242424;">3,872.22</div>
<div class="t" style="left:2173.31px;top:773px;font-size:29px;font-weight:normal;color:#242424;letter-spacing:-0.77px;-webkit-text-stroke:0.6px #242424;">8.93</div>
<div class="t" style="left:2295.66px;top:773px;font-size:29px;font-weight:normal;color:#242424;letter-spacing:-0.67px;-webkit-text-stroke:0.6px #242424;">3,863.29</div>
<div class="t" style="left:110.30px;top:828px;font-size:29px;font-weight:normal;color:#242424;letter-spacing:-0.30px;">Artisan Ale</div>
<div class="t" style="left:386.36px;top:828px;font-size:29px;font-weight:normal;color:#242424;letter-spacing:-1.27px;">369.29</div>
<div class="t" style="left:592.00px;top:828px;font-size:29px;font-weight:normal;color:#242424;letter-spacing:-1.33px;">0.85</div>
<div class="t" style="left:737.44px;top:828px;font-size:29px;font-weight:normal;color:#242424;letter-spacing:-1.29px;">368.44</div>
<div class="t" style="left:914.36px;top:828px;font-size:29px;font-weight:normal;color:#242424;letter-spacing:-1.27px;">376.91</div>
<div class="t" style="left:1119.07px;top:828px;font-size:29px;font-weight:normal;color:#242424;letter-spacing:-1.36px;">0.84</div>
<div class="t" style="left:1266.36px;top:828px;font-size:29px;font-weight:normal;color:#242424;letter-spacing:-1.27px;">376.07</div>
<div class="t" style="left:1441.44px;top:828px;font-size:29px;font-weight:normal;color:#242424;letter-spacing:-1.29px;">370.24</div>
<div class="t" style="left:1648.00px;top:828px;font-size:29px;font-weight:normal;color:#242424;letter-spacing:-1.33px;">0.85</div>
<div class="t" style="left:1793.44px;top:828px;font-size:29px;font-weight:normal;color:#242424;letter-spacing:-1.29px;">369.40</div>
<div class="t" style="left:1970.36px;top:828px;font-size:29px;font-weight:normal;color:#242424;letter-spacing:-1.27px;">364.51</div>
<div class="t" style="left:2175.07px;top:828px;font-size:29px;font-weight:normal;color:#242424;letter-spacing:-1.36px;">0.84</div>
<div class="t" style="left:2322.36px;top:828px;font-size:29px;font-weight:normal;color:#242424;letter-spacing:-1.27px;">363.67</div>
<div class="t" style="left:109.30px;top:885px;font-size:29px;font-weight:normal;color:#242424;letter-spacing:-0.72px;">Cosmic Craft ...</div>
<div class="t" style="left:415.00px;top:885px;font-size:29px;font-weight:normal;color:#242424;letter-spacing:-1.33px;">1.94</div>
<div class="t" style="left:592.00px;top:885px;font-size:29px;font-weight:normal;color:#242424;letter-spacing:-1.33px;">0.00</div>
<div class="t" style="left:767.00px;top:885px;font-size:29px;font-weight:normal;color:#242424;letter-spacing:-1.33px;">1.94</div>
<div class="t" style="left:944.00px;top:885px;font-size:29px;font-weight:normal;color:#242424;letter-spacing:-1.33px;">3.12</div>
<div class="t" style="left:1120.00px;top:885px;font-size:29px;font-weight:normal;color:#242424;letter-spacing:-1.33px;">0.01</div>
<div class="t" style="left:1296.00px;top:885px;font-size:29px;font-weight:normal;color:#242424;letter-spacing:-1.33px;">3.11</div>
<div class="t" style="left:1472.00px;top:885px;font-size:29px;font-weight:normal;color:#242424;letter-spacing:-1.33px;">3.71</div>
<div class="t" style="left:1648.00px;top:885px;font-size:29px;font-weight:normal;color:#242424;letter-spacing:-1.33px;">0.01</div>
<div class="t" style="left:1824.00px;top:885px;font-size:29px;font-weight:normal;color:#242424;letter-spacing:-1.33px;">3.70</div>
<div class="t" style="left:2000.00px;top:885px;font-size:29px;font-weight:normal;color:#242424;letter-spacing:-1.33px;">4.16</div>
<div class="t" style="left:2176.00px;top:885px;font-size:29px;font-weight:normal;color:#242424;letter-spacing:-1.33px;">0.01</div>
<div class="t" style="left:2352.00px;top:885px;font-size:29px;font-weight:normal;color:#242424;letter-spacing:-1.33px;">4.15</div>
<div class="t" style="left:108.30px;top:942px;font-size:29px;font-weight:normal;color:#242424;letter-spacing:-0.60px;">Eclipse Light</div>
<div class="t" style="left:385.44px;top:942px;font-size:29px;font-weight:normal;color:#242424;letter-spacing:-1.29px;">251.44</div>
<div class="t" style="left:592.00px;top:942px;font-size:29px;font-weight:normal;color:#242424;letter-spacing:-1.33px;">0.57</div>
<div class="t" style="left:738.36px;top:942px;font-size:29px;font-weight:normal;color:#242424;letter-spacing:-1.27px;">250.87</div>
<div class="t" style="left:913.44px;top:942px;font-size:29px;font-weight:normal;color:#242424;letter-spacing:-1.29px;">248.34</div>
<div class="t" style="left:1120.00px;top:942px;font-size:29px;font-weight:normal;color:#242424;letter-spacing:-1.33px;">0.56</div>
<div class="t" style="left:1266.36px;top:942px;font-size:29px;font-weight:normal;color:#242424;letter-spacing:-1.27px;">247.78</div>
<div class="t" style="left:1442.36px;top:942px;font-size:29px;font-weight:normal;color:#242424;letter-spacing:-1.27px;">244.51</div>
<div class="t" style="left:1648.00px;top:942px;font-size:29px;font-weight:normal;color:#242424;letter-spacing:-1.33px;">0.57</div>
<div class="t" style="left:1793.44px;top:942px;font-size:29px;font-weight:normal;color:#242424;letter-spacing:-1.29px;">243.94</div>
<div class="t" style="left:1970.36px;top:942px;font-size:29px;font-weight:normal;color:#242424;letter-spacing:-1.27px;">245.97</div>
<div class="t" style="left:2176.00px;top:942px;font-size:29px;font-weight:normal;color:#242424;letter-spacing:-1.33px;">0.56</div>
<div class="t" style="left:2322.36px;top:942px;font-size:29px;font-weight:normal;color:#242424;letter-spacing:-1.27px;">245.41</div>
<div class="t" style="left:109.30px;top:999px;font-size:29px;font-weight:normal;color:#242424;letter-spacing:0.12px;">Old Mill Stout</div>
<div class="t" style="left:386.36px;top:999px;font-size:29px;font-weight:normal;color:#242424;letter-spacing:-1.27px;">492.06</div>
<div class="t" style="left:591.92px;top:999px;font-size:29px;font-weight:normal;color:#242424;letter-spacing:-1.31px;">1.12</div>
<div class="t" style="left:737.44px;top:999px;font-size:29px;font-weight:normal;color:#242424;letter-spacing:-1.29px;">490.94</div>
<div class="t" style="left:914.36px;top:999px;font-size:29px;font-weight:normal;color:#242424;letter-spacing:-1.27px;">490.07</div>
<div class="t" style="left:1119.92px;top:999px;font-size:29px;font-weight:normal;color:#242424;letter-spacing:-1.31px;">1.12</div>
<div class="t" style="left:1265.44px;top:999px;font-size:29px;font-weight:normal;color:#242424;letter-spacing:-1.29px;">488.95</div>
<div class="t" style="left:1442.36px;top:999px;font-size:29px;font-weight:normal;color:#242424;letter-spacing:-1.27px;">478.76</div>
<div class="t" style="left:1647.92px;top:999px;font-size:29px;font-weight:normal;color:#242424;letter-spacing:-1.31px;">1.12</div>
<div class="t" style="left:1793.44px;top:999px;font-size:29px;font-weight:normal;color:#242424;letter-spacing:-1.29px;">477.64</div>
<div class="t" style="left:1970.36px;top:999px;font-size:29px;font-weight:normal;color:#242424;letter-spacing:-1.27px;">472.69</div>
<div class="t" style="left:2175.92px;top:999px;font-size:29px;font-weight:normal;color:#242424;letter-spacing:-1.31px;">1.12</div>
<div class="t" style="left:2322.36px;top:999px;font-size:29px;font-weight:normal;color:#242424;letter-spacing:-1.27px;">471.57</div>
<div class="t" style="left:108.30px;top:1056px;font-size:29px;font-weight:normal;color:#242424;letter-spacing:-0.96px;">Riverbend IPA</div>
<div class="t" style="left:385.44px;top:1056px;font-size:29px;font-weight:normal;color:#242424;letter-spacing:-1.29px;">653.54</div>
<div class="t" style="left:591.92px;top:1056px;font-size:29px;font-weight:normal;color:#242424;letter-spacing:-1.31px;">1.50</div>
<div class="t" style="left:737.44px;top:1056px;font-size:29px;font-weight:normal;color:#242424;letter-spacing:-1.29px;">652.04</div>
<div class="t" style="left:914.36px;top:1056px;font-size:29px;font-weight:normal;color:#242424;letter-spacing:-1.27px;">656.18</div>
<div class="t" style="left:1119.92px;top:1056px;font-size:29px;font-weight:normal;color:#242424;letter-spacing:-1.31px;">1.49</div>
<div class="t" style="left:1266.36px;top:1056px;font-size:29px;font-weight:normal;color:#242424;letter-spacing:-1.27px;">654.69</div>
<div class="t" style="left:1441.44px;top:1056px;font-size:29px;font-weight:normal;color:#242424;letter-spacing:-1.29px;">657.04</div>
<div class="t" style="left:1647.92px;top:1056px;font-size:29px;font-weight:normal;color:#242424;letter-spacing:-1.31px;">1.49</div>
<div class="t" style="left:1793.44px;top:1056px;font-size:29px;font-weight:normal;color:#242424;letter-spacing:-1.29px;">655.55</div>
<div class="t" style="left:1970.36px;top:1056px;font-size:29px;font-weight:normal;color:#242424;letter-spacing:-1.27px;">651.92</div>
<div class="t" style="left:2175.92px;top:1056px;font-size:29px;font-weight:normal;color:#242424;letter-spacing:-1.31px;">1.50</div>
<div class="t" style="left:2322.36px;top:1056px;font-size:29px;font-weight:normal;color:#242424;letter-spacing:-1.27px;">650.43</div>
<div class="t" style="left:109.30px;top:1114px;font-size:29px;font-weight:normal;color:#242424;letter-spacing:-0.50px;">Summit Lager</div>
<div class="t" style="left:363.21px;top:1114px;font-size:29px;font-weight:normal;color:#242424;letter-spacing:-1.17px;">2,139.77</div>
<div class="t" style="left:592.00px;top:1114px;font-size:29px;font-weight:normal;color:#242424;letter-spacing:-1.33px;">4.91</div>
<div class="t" style="left:715.21px;top:1114px;font-size:29px;font-weight:normal;color:#242424;letter-spacing:-1.17px;">2,134.87</div>
<div class="t" style="left:891.21px;top:1114px;font-size:29px;font-weight:normal;color:#242424;letter-spacing:-1.17px;">2,150.08</div>
<div class="t" style="left:1120.00px;top:1114px;font-size:29px;font-weight:normal;color:#242424;letter-spacing:-1.33px;">4.90</div>
<div class="t" style="left:1243.21px;top:1114px;font-size:29px;font-weight:normal;color:#242424;letter-spacing:-1.17px;">2,145.18</div>
<div class="t" style="left:1419.21px;top:1114px;font-size:29px;font-weight:normal;color:#242424;letter-spacing:-1.17px;">2,131.80</div>
<div class="t" style="left:1648.00px;top:1114px;font-size:29px;font-weight:normal;color:#242424;letter-spacing:-1.33px;">4.91</div>
<div class="t" style="left:1771.21px;top:1114px;font-size:29px;font-weight:normal;color:#242424;letter-spacing:-1.17px;">2,126.89</div>
<div class="t" style="left:1947.21px;top:1114px;font-size:29px;font-weight:normal;color:#242424;letter-spacing:-1.17px;">2,132.96</div>
<div class="t" style="left:2176.00px;top:1114px;font-size:29px;font-weight:normal;color:#242424;letter-spacing:-1.33px;">4.90</div>
<div class="t" style="left:2299.21px;top:1114px;font-size:29px;font-weight:normal;color:#242424;letter-spacing:-1.17px;">2,128.06</div>
<svg class="r" style="left:66.5px;top:1176.5px;" width="19" height="18" viewBox="0 0 19 18" fill="none" stroke-linecap="round" stroke-linejoin="round"><rect x="0.75" y="0.75" width="17.5" height="16.5" stroke="#333" stroke-width="1.5" fill="none"/><path d="M4.5 9 L14.5 9" stroke="#333" stroke-width="1.5" stroke-linecap="butt"/></svg>
<div class="t" style="left:97.60px;top:1174px;font-size:29px;font-weight:normal;color:#242424;letter-spacing:-0.15px;-webkit-text-stroke:0.6px #242424;">Hard Seltzer</div>
<div class="t" style="left:382.65px;top:1175px;font-size:29px;font-weight:normal;color:#242424;letter-spacing:-0.73px;-webkit-text-stroke:0.6px #242424;">299.76</div>
<div class="t" style="left:589.31px;top:1175px;font-size:29px;font-weight:normal;color:#242424;letter-spacing:-0.77px;-webkit-text-stroke:0.6px #242424;">0.60</div>
<div class="t" style="left:734.65px;top:1175px;font-size:29px;font-weight:normal;color:#242424;letter-spacing:-0.73px;-webkit-text-stroke:0.6px #242424;">299.16</div>
<div class="t" style="left:910.65px;top:1175px;font-size:29px;font-weight:normal;color:#242424;letter-spacing:-0.73px;-webkit-text-stroke:0.6px #242424;">292.04</div>
<div class="t" style="left:1117.31px;top:1175px;font-size:29px;font-weight:normal;color:#242424;letter-spacing:-0.77px;-webkit-text-stroke:0.6px #242424;">0.60</div>
<div class="t" style="left:1262.65px;top:1175px;font-size:29px;font-weight:normal;color:#242424;letter-spacing:-0.73px;-webkit-text-stroke:0.6px #242424;">291.44</div>
<div class="t" style="left:1438.65px;top:1175px;font-size:29px;font-weight:normal;color:#242424;letter-spacing:-0.73px;-webkit-text-stroke:0.6px #242424;">290.98</div>
<div class="t" style="left:1645.31px;top:1175px;font-size:29px;font-weight:normal;color:#242424;letter-spacing:-0.77px;-webkit-text-stroke:0.6px #242424;">0.60</div>
<div class="t" style="left:1790.65px;top:1175px;font-size:29px;font-weight:normal;color:#242424;letter-spacing:-0.73px;-webkit-text-stroke:0.6px #242424;">290.38</div>
<div class="t" style="left:1966.65px;top:1175px;font-size:29px;font-weight:normal;color:#242424;letter-spacing:-0.73px;-webkit-text-stroke:0.6px #242424;">299.38</div>
<div class="t" style="left:2173.31px;top:1175px;font-size:29px;font-weight:normal;color:#242424;letter-spacing:-0.77px;-webkit-text-stroke:0.6px #242424;">0.60</div>
<div class="t" style="left:2318.65px;top:1175px;font-size:29px;font-weight:normal;color:#242424;letter-spacing:-0.73px;-webkit-text-stroke:0.6px #242424;">298.78</div>
<div class="t" style="left:110.30px;top:1231px;font-size:29px;font-weight:normal;color:#242424;letter-spacing:-1.01px;">AquaSplash</div>
<div class="t" style="left:401.18px;top:1231px;font-size:29px;font-weight:normal;color:#242424;letter-spacing:-1.29px;">74.03</div>
<div class="t" style="left:592.00px;top:1231px;font-size:29px;font-weight:normal;color:#242424;letter-spacing:-1.33px;">0.15</div>
<div class="t" style="left:753.18px;top:1231px;font-size:29px;font-weight:normal;color:#242424;letter-spacing:-1.29px;">73.88</div>
<div class="t" style="left:929.18px;top:1231px;font-size:29px;font-weight:normal;color:#242424;letter-spacing:-1.29px;">72.39</div>
<div class="t" style="left:1120.00px;top:1231px;font-size:29px;font-weight:normal;color:#242424;letter-spacing:-1.33px;">0.15</div>
<div class="t" style="left:1280.25px;top:1231px;font-size:29px;font-weight:normal;color:#242424;letter-spacing:-1.31px;">72.24</div>
<div class="t" style="left:1456.25px;top:1231px;font-size:29px;font-weight:normal;color:#242424;letter-spacing:-1.31px;">69.75</div>
<div class="t" style="left:1648.00px;top:1231px;font-size:29px;font-weight:normal;color:#242424;letter-spacing:-1.33px;">0.15</div>
<div class="t" style="left:1809.18px;top:1231px;font-size:29px;font-weight:normal;color:#242424;letter-spacing:-1.29px;">69.59</div>
<div class="t" style="left:1985.18px;top:1231px;font-size:29px;font-weight:normal;color:#242424;letter-spacing:-1.29px;">73.83</div>
<div class="t" style="left:2176.00px;top:1231px;font-size:29px;font-weight:normal;color:#242424;letter-spacing:-1.33px;">0.15</div>
<div class="t" style="left:2337.18px;top:1231px;font-size:29px;font-weight:normal;color:#242424;letter-spacing:-1.29px;">73.68</div>
<div class="t" style="left:108.30px;top:1288px;font-size:29px;font-weight:normal;color:#242424;letter-spacing:-1.62px;">FizzJoy</div>
<div class="t" style="left:386.29px;top:1288px;font-size:29px;font-weight:normal;color:#242424;letter-spacing:-1.26px;">120.43</div>
<div class="t" style="left:591.07px;top:1288px;font-size:29px;font-weight:normal;color:#242424;letter-spacing:-1.36px;">0.24</div>
<div class="t" style="left:738.29px;top:1288px;font-size:29px;font-weight:normal;color:#242424;letter-spacing:-1.26px;">120.19</div>
<div class="t" style="left:914.29px;top:1288px;font-size:29px;font-weight:normal;color:#242424;letter-spacing:-1.26px;">115.68</div>
<div class="t" style="left:1119.07px;top:1288px;font-size:29px;font-weight:normal;color:#242424;letter-spacing:-1.36px;">0.24</div>
<div class="t" style="left:1265.36px;top:1288px;font-size:29px;font-weight:normal;color:#242424;letter-spacing:-1.27px;">115.44</div>
<div class="t" style="left:1442.29px;top:1288px;font-size:29px;font-weight:normal;color:#242424;letter-spacing:-1.26px;">116.72</div>
<div class="t" style="left:1647.07px;top:1288px;font-size:29px;font-weight:normal;color:#242424;letter-spacing:-1.36px;">0.24</div>
<div class="t" style="left:1794.29px;top:1288px;font-size:29px;font-weight:normal;color:#242424;letter-spacing:-1.26px;">116.48</div>
<div class="t" style="left:1970.29px;top:1288px;font-size:29px;font-weight:normal;color:#242424;letter-spacing:-1.26px;">117.92</div>
<div class="t" style="left:2175.07px;top:1288px;font-size:29px;font-weight:normal;color:#242424;letter-spacing:-1.36px;">0.24</div>
<div class="t" style="left:2322.29px;top:1288px;font-size:29px;font-weight:normal;color:#242424;letter-spacing:-1.26px;">117.68</div>
<div class="r" style="left:841.5px;top:755.5px;width:176px;height:58px;box-sizing:border-box;border:2px solid #0f6cbd"></div>
<svg class="r" style="left:847px;top:772px;" width="26" height="26" viewBox="0 0 26 26" fill="none" stroke-linecap="round" stroke-linejoin="round"><path d="M2.5 23.5 L4 17 L18 3 Q20 1 22 3 L23 4 Q25 6 23 8 L9 22 Z M16 5 L21 10 M4 17 L9 22" stroke="#222" stroke-width="1.6"/></svg></div></div>
<div class="r" style="left:2569px;top:675px;width:16px;height:637px;box-sizing:border-box;background:#f9f9f9;border:1px solid #eeeeee;border-radius:8px"></div>
<div class="r" style="left:2569px;top:675px;width:16px;height:311px;background:#ababab;border-radius:8px"></div>
<div class="r" style="left:19px;top:1318px;width:2567px;height:54px;background:#f5f5f5;"></div>
<div class="r" style="left:19px;top:1317px;width:2567px;height:2px;background:#e0e0e0;"></div>
<div class="r" style="left:19px;top:1371px;width:2776px;height:2px;background:#e0e0e0;"></div>
<div class="t" style="left:38.00px;top:1335px;font-size:23px;font-weight:normal;color:#424242;letter-spacing:-0.25px;">Rows: 20</div>
<div class="t" style="left:151.50px;top:1335px;font-size:23px;font-weight:normal;color:#424242;letter-spacing:0.17px;">Columns: 18</div>
<div class="r" style="left:2082px;top:1346px;width:21px;height:2px;background:#444;"></div>
<div class="r" style="left:2135.5px;top:1346px;width:199px;height:4px;background:#c8c8c8;border-radius:2px"></div>
<div class="r" style="left:2135.5px;top:1346px;width:95px;height:4px;background:#2d7a69;border-radius:2px"></div>
<div class="r" style="left:2213px;top:1331px;width:34px;height:34px;box-sizing:border-box;border-radius:50%;background:#2f7b6b;border:3px solid #fff"></div>
<svg class="r" style="left:2353px;top:1337px;" width="24" height="23" viewBox="0 0 24 23" fill="none" stroke-linecap="round" stroke-linejoin="round"><path d="M12 1.5 L12 21.5 M1.5 11.5 L22.5 11.5" stroke="#242424" stroke-width="2" stroke-linecap="butt"/></svg>
<div class="r" style="left:2406px;top:1326px;width:110px;height:38px;box-sizing:border-box;background:#fff;border:1px solid #d6d6d6;border-bottom:2px solid #555;border-radius:7px"></div>
<div class="t" style="left:2430.50px;top:1336px;font-size:22px;font-weight:normal;color:#242424;letter-spacing:1.67px;">110%</div>
<svg class="r" style="left:2539.5px;top:1327px;" width="34" height="34" viewBox="0 0 34 34" fill="none" stroke-linecap="round" stroke-linejoin="round"><path d="M13.05 1.52 L20.95 1.52 L21.92 5.98 L24.08 7.23 L28.43 5.83 L32.39 12.68 L29.01 15.75 L29.01 18.25 L32.39 21.32 L28.43 28.17 L24.08 26.77 L21.92 28.02 L20.95 32.48 L13.05 32.48 L12.08 28.02 L9.92 26.77 L5.57 28.17 L1.61 21.32 L4.99 18.25 L4.99 15.75 L1.61 12.68 L5.57 5.83 L9.92 7.23 L12.08 5.98 Z" stroke="#242424" stroke-width="2" stroke-linejoin="round"/><circle cx="17.0" cy="17.0" r="3.74" stroke="#117865" stroke-width="2"/></svg>
<div class="r" style="left:35px;top:1385px;width:352px;height:63.5px;background:#ebebeb;border-radius:10px"></div>
<div class="r" style="left:387px;top:1396px;width:1.5px;height:40px;background:#cfcfcf;"></div>
<svg class="r" style="left:50px;top:1401px;" width="34" height="34" viewBox="0 0 34 34" fill="none" stroke-linecap="round" stroke-linejoin="round"><circle cx="15.5" cy="17.4" r="12.55" stroke="#404040" stroke-width="3.7"/><circle cx="15.5" cy="17.4" r="5.35" stroke="#404040" stroke-width="3.7"/><path d="M15.5 17.4 L29 3.9" stroke="#ebebeb" stroke-width="5.5" stroke-linecap="butt"/><path d="M16 16.9 L28.5 4.4" stroke="#404040" stroke-width="2"/><path d="M28.8 0.8 L29.8 4.2 L32.8 4.5 L27.8 9.5 L24.4 6.6 Z" fill="#404040"/></svg>
<div class="t" style="left:98.00px;top:1405px;font-size:28px;font-weight:normal;color:#242424;letter-spacing:-0.33px;">Planning 1</div>
<svg class="r" style="left:344.5px;top:1414px;" width="17" height="10" viewBox="0 0 17 10" fill="none" stroke-linecap="round" stroke-linejoin="round"><path d="M0 0 L17 0 L8.5 9.5 Z" fill="#404040"/></svg>
<svg class="r" style="left:412px;top:1400.5px;" width="34" height="34" viewBox="0 0 34 34" fill="none" stroke-linecap="round" stroke-linejoin="round"><path d="M17 1.5 L17 32.5 M1.5 17 L32.5 17" stroke="#242424" stroke-width="2.2" stroke-linecap="butt"/></svg>
<svg class="r" style="left:2603.5px;top:1401.5px;" width="31" height="31" viewBox="0 0 31 31" fill="none" stroke-linecap="round" stroke-linejoin="round"><path d="M11.90 1.38 L19.10 1.38 L19.99 5.45 L21.96 6.59 L25.92 5.32 L29.53 11.56 L26.45 14.36 L26.45 16.64 L29.53 19.44 L25.92 25.68 L21.96 24.41 L19.99 25.55 L19.10 29.62 L11.90 29.62 L11.01 25.55 L9.04 24.41 L5.08 25.68 L1.47 19.44 L4.55 16.64 L4.55 14.36 L1.47 11.56 L5.08 5.32 L9.04 6.59 L11.01 5.45 Z" stroke="#242424" stroke-width="2" stroke-linejoin="round"/><circle cx="15.5" cy="15.5" r="3.41" stroke="#222" stroke-width="2"/></svg>
<svg class="r" style="left:2672px;top:1398px;" width="34" height="36" viewBox="0 0 34 36" fill="none" stroke-linecap="round" stroke-linejoin="round"><path d="M14 33 L7 33 Q2 33 2 28 L2 7 Q2 2 7 2 L19 2 Q24 2 24 7 L24 16" stroke="#333" stroke-width="2.4"/><path d="M8 10 L18 10 M8 18 L14 18" stroke="#333" stroke-width="2.2"/><circle cx="23" cy="25.5" r="9" fill="#117865"/><path d="M23 20.5 L23 30.5 M18 25.5 L28 25.5" stroke="#fff" stroke-width="2.2"/></svg>
<svg class="r" style="left:2746px;top:1399px;" width="36" height="36" viewBox="0 0 36 36" fill="none" stroke-linecap="round" stroke-linejoin="round"><path d="M3 19 Q3 4 16 3 L20 3" stroke="#222" stroke-width="2.4"/><path d="M7 22 Q7 8 18 7 L22 7" stroke="#222" stroke-width="2.4"/><rect x="10.5" y="11" width="22" height="22" rx="6" stroke="#222" stroke-width="2.6"/></svg>
<div class="r" style="left:2586px;top:17px;width:2px;height:1356px;background:#d0d0d0;"></div>
<div class="r" style="left:2656px;top:17px;width:2px;height:1356px;background:#d0d0d0;"></div>
<div class="r" style="left:2726px;top:17px;width:2px;height:1356px;background:#d0d0d0;"></div>
<svg class="r" style="left:2612px;top:45px;" width="18" height="18" viewBox="0 0 18 18" fill="none" stroke-linecap="round" stroke-linejoin="round"><path d="M8 2 L2 9 L8 16 M14 2 L8 9 L14 16" stroke="#242424" stroke-width="1.6"/></svg>
<svg class="r" style="left:2682px;top:45px;" width="18" height="18" viewBox="0 0 18 18" fill="none" stroke-linecap="round" stroke-linejoin="round"><path d="M8 2 L2 9 L8 16 M14 2 L8 9 L14 16" stroke="#242424" stroke-width="1.6"/></svg>
<svg class="r" style="left:2744px;top:45px;" width="18" height="18" viewBox="0 0 18 18" fill="none" stroke-linecap="round" stroke-linejoin="round"><path d="M8 2 L2 9 L8 16 M14 2 L8 9 L14 16" stroke="#242424" stroke-width="1.6"/></svg>
<div class="t" style="left:2604px;top:86px;font-size:31px;font-weight:normal;-webkit-text-stroke:0.7px #1a1a1a;color:#1a1a1a;writing-mode:vertical-rl;letter-spacing:0.4px">Filters</div>
<div class="t" style="left:2673.5px;top:86px;font-size:31px;font-weight:normal;-webkit-text-stroke:0.7px #1a1a1a;color:#1a1a1a;writing-mode:vertical-rl;letter-spacing:0px">Fields</div>
<div class="t" style="left:2743px;top:134px;font-size:31px;font-weight:normal;-webkit-text-stroke:0.7px #1a1a1a;color:#1a1a1a;writing-mode:vertical-rl;letter-spacing:0px">Data</div>
<svg class="r" style="left:2735px;top:70px;" width="50" height="45" viewBox="0 0 50 45" fill="none" stroke-linecap="round" stroke-linejoin="round"><path d="M13.7 24 A12.3 12.3 0 0 1 36.9 17.9" stroke="#242424" stroke-width="2.3"/><path d="M38 11 L38 19 L30.7 19" stroke="#242424" stroke-width="2.3"/><path d="M38.3 23.5 A12.3 12.3 0 0 1 15.1 29.7" stroke="#242424" stroke-width="2.3"/><path d="M13.8 36 L13.8 28.5 L20.6 28.5" stroke="#242424" stroke-width="2.3"/></svg>
<svg class="r" style="left:0;top:0" width="2808" height="1471" viewBox="0 0 2808 1471"><path d="M382.40 349.55 L822.10 731.42 L824.47 724.04 L836.70 750.40 L809.00 741.60 L816.02 738.32 L381.60 350.45 Z" fill="#ff2a6a" stroke="#ff2a6a" stroke-width="1" stroke-linejoin="round"/></svg>

</body></html>
